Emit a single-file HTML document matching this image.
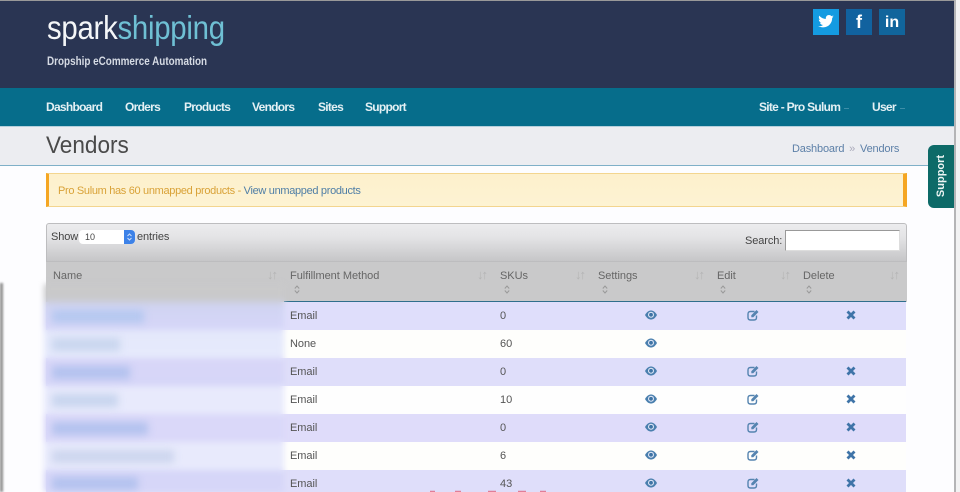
<!DOCTYPE html>
<html><head><meta charset="utf-8">
<style>
*{box-sizing:border-box}
html,body{margin:0;padding:0;background:#fdfdff}
body{width:960px;height:492px;overflow:hidden;position:relative;font-family:"Liberation Sans",sans-serif}
.a{position:absolute;white-space:nowrap}
.nav{color:#e4f0f4;font-size:12px;font-weight:bold;top:100px;letter-spacing:-.72px}
.th{color:#666;font-size:11px;top:270px;letter-spacing:-.03px}
.sort{position:absolute;top:267px;color:#b4b4b5;font-size:13px;letter-spacing:-2px;}
.ud{position:absolute;top:285px;width:6px;height:9px}
.row{position:absolute;left:46px;width:860px;height:28px}
.c{position:absolute;color:#555;font-size:11px;letter-spacing:-.05px;white-space:nowrap}
.blur{position:absolute;left:52px;height:13px;filter:blur(4px)}
svg.i{position:absolute}
</style></head><body>

<div class="a" style="left:0;top:0;width:954px;height:89px;background:#2a3553"></div>
<div class="a" style="left:0;top:0;width:960px;height:1px;background:#999"></div>
<div class="a" style="left:47px;top:9px;font-size:33px;color:#f4f6f8;letter-spacing:-.3px;transform:scaleX(.89);transform-origin:left top">spark<span style="color:#6fc0d4">shipping</span></div>
<div class="a" style="left:47px;top:56px;font-size:11.5px;font-weight:bold;color:#d6dbe4;transform:scaleX(.86);transform-origin:left top">Dropship eCommerce Automation</div>

<div class="a" style="left:813px;top:9px;width:26px;height:26px;background:#149be1"></div>
<svg class="i" style="left:818px;top:15px" width="16" height="13" viewBox="0 0 24 20"><path fill="#fff" d="M24 2.400c-.9.400-1.800.7-2.800.8 1-.6 1.800-1.600 2.200-2.700-1 .6-2 1-3.100 1.200C19.300.7 18 0 16.600 0c-2.700 0-4.900 2.200-4.900 4.900 0 .4 0 .8.1 1.100C7.700 5.800 4.100 3.900 1.700.9c-.4.700-.7 1.600-.7 2.500 0 1.700.9 3.200 2.200 4.100-.8 0-1.600-.2-2.200-.6v.1c0 2.400 1.700 4.400 3.900 4.800-.4.100-.8.200-1.300.2-.3 0-.6 0-.9-.1.600 2 2.400 3.400 4.600 3.400-1.700 1.300-3.800 2.100-6.100 2.100-.4 0-.8 0-1.200-.1C2.200 18.300 4.800 19 7.500 19c9.100 0 14-7.500 14-14v-.6c1-.7 1.800-1.600 2.500-2z"/></svg>
<div class="a" style="left:846px;top:9px;width:26px;height:26px;background:#11629f;color:#fff;font-size:18px;font-weight:bold;text-align:center;line-height:27px">f</div>
<div class="a" style="left:879px;top:9px;width:26px;height:26px;background:#11659c;color:#fff;font-size:16px;font-weight:bold;text-align:center;line-height:27px">in</div>

<div class="a" style="left:0;top:88px;width:954px;height:38px;background:#066d8b"></div>
<div class="a nav" style="left:46px">Dashboard</div>
<div class="a nav" style="left:125px">Orders</div>
<div class="a nav" style="left:184px">Products</div>
<div class="a nav" style="left:252px">Vendors</div>
<div class="a nav" style="left:318px">Sites</div>
<div class="a nav" style="left:365px">Support</div>
<div class="a nav" style="left:759px">Site - Pro Sulum</div>
<div class="a" style="left:844px;top:108px;width:5px;height:1px;background:#3d8ea8"></div>
<div class="a nav" style="left:872px">User</div>
<div class="a" style="left:900px;top:108px;width:5px;height:1px;background:#3d8ea8"></div>

<div class="a" style="left:0;top:126px;width:954px;height:40px;background:#ecedf1;border-bottom:1px solid #7fb0c8;border-top:1px solid #b5d0dc"></div>
<div class="a" style="left:46px;top:132px;font-size:24px;color:#4a4a4a;transform:scaleX(.94);transform-origin:left top">Vendors</div>
<div class="a" style="left:792px;top:142.500px;font-size:11px;color:#5d80a8;letter-spacing:-.17px">Dashboard <span style="color:#aab;margin:0 2px">»</span> Vendors</div>

<div class="a" style="left:954px;top:0;width:6px;height:492px;background:#f2f2f3;border-left:2px solid #b4b4b6"></div>

<div class="a" style="left:928px;top:145px;width:26px;height:63px;background:#0d6a68;border-radius:6px 0 0 6px"></div>
<div class="a" style="left:941px;top:176px;width:0;height:0"><div style="position:absolute;transform:translate(-50%,-50%) rotate(-90deg);font-size:11px;font-weight:bold;color:#eef5f4;white-space:nowrap">Support</div></div>

<div class="a" style="left:46px;top:173px;width:861px;height:34px;background:linear-gradient(#fdf0cc,#fdf3d3);border:1px solid #f3d58f;border-left:3px solid #f5a623;border-right:4px solid #f5a623"></div>
<div class="a" style="left:58px;top:185px;font-size:11px;color:#d9a238;letter-spacing:-.32px">Pro Sulum has 60 unmapped products - <span style="color:#4f7ea6">View unmapped products</span></div>

<div class="a" style="left:46px;top:223px;width:861px;height:39px;background:linear-gradient(#ececee,#e4e4e6 35%,#c6c6c8);border:1px solid #bdbdbf;border-radius:3px 3px 0 0"></div>
<div class="a" style="left:51px;top:231px;font-size:11px;color:#444;letter-spacing:-.1px">Show</div>
<div class="a" style="left:79px;top:230px;width:56px;height:14px;background:#fff;border-radius:4px;font-size:9px;color:#444;padding:1.500px 0 0 6px">10</div>
<div class="a" style="left:124px;top:230px;width:11px;height:14px;background:#3d82e8;border-radius:0 4px 4px 0"></div>
<svg class="i" style="left:126px;top:233px" width="7" height="8" viewBox="0 0 7 8"><path d="M1.500 3L3.500 1L5.500 3M1.500 5L3.500 7L5.500 5" stroke="#cfe0fb" fill="none"/></svg>
<div class="a" style="left:137px;top:231px;font-size:11px;color:#444;letter-spacing:-.1px">entries</div>
<div class="a" style="left:745px;top:235px;font-size:11px;color:#444;letter-spacing:-.1px">Search:</div>
<div class="a" style="left:785px;top:230px;width:115px;height:21px;background:#fff;border:1px solid #999;border-bottom-color:#ddd;border-right-color:#ddd"></div>

<div class="a" style="left:46px;top:262px;width:861px;height:40px;background:#c9c9ca"></div>
<div class="a" style="left:284px;top:301px;width:622px;height:1.500px;background:#2f6f8c"></div>
<div class="a th" style="left:53px">Name</div>
<div class="a th" style="left:290px">Fulfillment Method</div>
<div class="a th" style="left:500px">SKUs</div>
<div class="a th" style="left:598px">Settings</div>
<div class="a th" style="left:717px">Edit</div>
<div class="a th" style="left:803px">Delete</div>
<div class="sort" style="left:267px">↓↑</div>
<div class="sort" style="left:477px">↓↑</div>
<div class="sort" style="left:575px">↓↑</div>
<div class="sort" style="left:694px">↓↑</div>
<div class="sort" style="left:780px">↓↑</div>
<div class="sort" style="left:889px">↓↑</div>
<svg class="ud" style="left:294px" viewBox="0 0 6 9"><path d="M.8 3.500L3 1L5.200 3.500M.8 5.500L3 8L5.200 5.500" stroke="#999" fill="none"/></svg>
<svg class="ud" style="left:504px" viewBox="0 0 6 9"><path d="M.8 3.500L3 1L5.200 3.500M.8 5.500L3 8L5.200 5.500" stroke="#999" fill="none"/></svg>
<svg class="ud" style="left:602px" viewBox="0 0 6 9"><path d="M.8 3.500L3 1L5.200 3.500M.8 5.500L3 8L5.200 5.500" stroke="#999" fill="none"/></svg>
<svg class="ud" style="left:720px" viewBox="0 0 6 9"><path d="M.8 3.500L3 1L5.200 3.500M.8 5.500L3 8L5.200 5.500" stroke="#999" fill="none"/></svg>
<svg class="ud" style="left:806px" viewBox="0 0 6 9"><path d="M.8 3.500L3 1L5.200 3.500M.8 5.500L3 8L5.200 5.500" stroke="#999" fill="none"/></svg>

<div class="row" style="top:302px;background:#dfdefb"></div>
<div class="row" style="top:330px;background:#fefefc"></div>
<div class="row" style="top:358px;background:#dfdefa"></div>
<div class="row" style="top:386px;background:#fefefe"></div>
<div class="row" style="top:414px;background:#dfdcfa"></div>
<div class="row" style="top:442px;background:#fefefc"></div>
<div class="row" style="top:470px;height:22px;background:#dfdefa"></div>

<div class="a" style="left:44px;top:284px;width:240px;height:208px;filter:blur(3px);background:linear-gradient(#c9c9ca 0,#c9c9ca 14px,#d0d4f2 22px,#d6d6f8 44px,#e4e8fb 48px,#e6eafc 72px,#d8d6f8 76px,#d6d6f8 100px,#e8eafc 104px,#e8eafc 128px,#dad8f9 132px,#dad8f9 156px,#e8eafc 160px,#e8eafc 184px,#d6d6f8 188px)"></div>
<div class="blur" style="top:310px;width:92px;background:#b5c8f0"></div>
<div class="blur" style="top:338px;width:68px;background:#c9d6ee"></div>
<div class="blur" style="top:366px;width:78px;background:#b3c2ee"></div>
<div class="blur" style="top:394px;width:66px;background:#c8d5ee"></div>
<div class="blur" style="top:422px;width:96px;background:#b3c2ee"></div>
<div class="blur" style="top:450px;width:122px;background:#cdd6ee"></div>
<div class="blur" style="top:477px;width:86px;background:#b3c2ee"></div>
<div class="a" style="left:0;top:283px;width:3px;height:209px;background:#8b8b8b;filter:blur(1px)"></div>

<div class="c" style="left:290px;top:310px">Email</div><div class="c" style="left:500px;top:310px">0</div>
<div class="c" style="left:290px;top:338px">None</div><div class="c" style="left:500px;top:338px">60</div>
<div class="c" style="left:290px;top:366px">Email</div><div class="c" style="left:500px;top:366px">0</div>
<div class="c" style="left:290px;top:394px">Email</div><div class="c" style="left:500px;top:394px">10</div>
<div class="c" style="left:290px;top:422px">Email</div><div class="c" style="left:500px;top:422px">0</div>
<div class="c" style="left:290px;top:450px">Email</div><div class="c" style="left:500px;top:450px">6</div>
<div class="c" style="left:290px;top:478px">Email</div><div class="c" style="left:500px;top:478px">43</div>

<svg width="0" height="0" style="position:absolute"><defs>
<g id="eye"><path d="M0 5C2 1.500 4 .5 6 .5S10 1.500 12 5C10 8.500 8 9.500 6 9.500S2 8.500 0 5Z" fill="#4a7fae"/><circle cx="6" cy="4.800" r="3" fill="#dfe6f6"/><circle cx="6" cy="4.800" r="1.900" fill="#3f74a5"/></g>
<g id="ed"><path d="M7.500 2.500H3.500Q1 2.500 1 5V8.500Q1 11 3.500 11H7Q9.500 11 9.500 8.500V6.500" fill="none" stroke="#5584b0" stroke-width="1.400"/><path d="M4.300 6.200L4.300 8.200L6.300 8.200L11.500 3L9.500 1Z" fill="#5584b0"/></g>
<g id="x"><path d="M1.500 1.500L8.500 8.500M8.500 1.500L1.500 8.500" stroke="#3f74a8" stroke-width="2.800"/></g>
</defs></svg>
<svg class="i" style="left:645px;top:310px" width="12" height="10"><use href="#eye"/></svg>
<svg class="i" style="left:645px;top:338px" width="12" height="10"><use href="#eye"/></svg>
<svg class="i" style="left:645px;top:366px" width="12" height="10"><use href="#eye"/></svg>
<svg class="i" style="left:645px;top:394px" width="12" height="10"><use href="#eye"/></svg>
<svg class="i" style="left:645px;top:422px" width="12" height="10"><use href="#eye"/></svg>
<svg class="i" style="left:645px;top:450px" width="12" height="10"><use href="#eye"/></svg>
<svg class="i" style="left:645px;top:478px" width="12" height="10"><use href="#eye"/></svg>

<svg class="i" style="left:747px;top:309px" width="12" height="12"><use href="#ed"/></svg>
<svg class="i" style="left:747px;top:365px" width="12" height="12"><use href="#ed"/></svg>
<svg class="i" style="left:747px;top:393px" width="12" height="12"><use href="#ed"/></svg>
<svg class="i" style="left:747px;top:421px" width="12" height="12"><use href="#ed"/></svg>
<svg class="i" style="left:747px;top:449px" width="12" height="12"><use href="#ed"/></svg>
<svg class="i" style="left:747px;top:477px" width="12" height="12"><use href="#ed"/></svg>

<svg class="i" style="left:846px;top:310px" width="10" height="10"><use href="#x"/></svg>
<svg class="i" style="left:846px;top:366px" width="10" height="10"><use href="#x"/></svg>
<svg class="i" style="left:846px;top:394px" width="10" height="10"><use href="#x"/></svg>
<svg class="i" style="left:846px;top:422px" width="10" height="10"><use href="#x"/></svg>
<svg class="i" style="left:846px;top:450px" width="10" height="10"><use href="#x"/></svg>
<svg class="i" style="left:846px;top:478px" width="10" height="10"><use href="#x"/></svg>

<svg class="i" style="left:400px;top:490px" width="170" height="2"><path d="M30 1.500h5M55 1.500h6M88 1.500h8M118 1.500h8M140 1.500h6" stroke="#e0566e" stroke-width="1.500" fill="none" opacity=".7"/></svg>
</body></html>
